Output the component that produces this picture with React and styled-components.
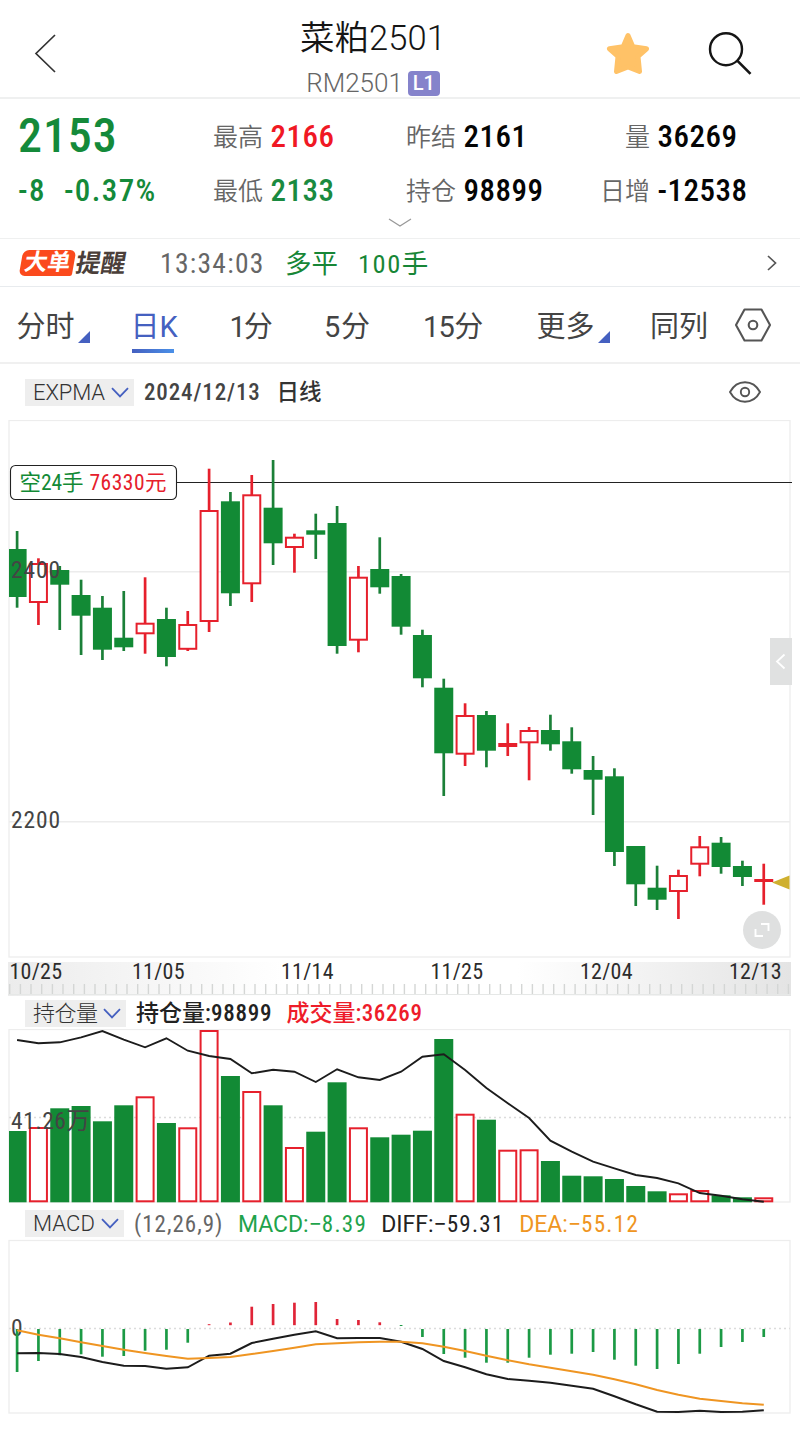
import React from 'react';
import styled, { createGlobalStyle } from 'styled-components';

const GREEN = '#128a35';
const RED = '#e6202c';
const BLUE = '#4560c0';

const STEP = 21.333;
const cx = (i) => 17.1 + i * STEP;

// [rise, high, top, bottom, low, volumeTop]
const candles = [
  [0, 531, 549, 597, 607.7, 1131],
  [1, 558.3, 563, 603, 625, 1127],
  [0, 566, 570, 584.7, 630, 1108.3],
  [0, 579.7, 595, 615.7, 655, 1106],
  [0, 596, 607.7, 649.7, 660, 1121.3],
  [0, 591, 637.7, 647.3, 651, 1105.3],
  [1, 577.3, 622.7, 634.3, 653.7, 1096.3],
  [0, 607.7, 619, 657, 666.3, 1123],
  [1, 611, 624, 649.8, 651, 1127.3],
  [1, 468.7, 510, 622, 632, 1030],
  [0, 492, 501.3, 593.3, 606, 1076],
  [1, 475, 494.3, 584.3, 602, 1091],
  [0, 460, 507.7, 543.3, 565, 1105.3],
  [1, 533.7, 536.7, 548, 572.7, 1147],
  [0, 513.7, 530.3, 534.7, 559, 1131.7],
  [0, 506, 523, 646, 653.7, 1082.3],
  [1, 566, 576.7, 640.7, 652.3, 1127.3],
  [0, 537.3, 569, 587.3, 593.7, 1137.3],
  [0, 574, 576, 626.7, 634.7, 1134.7],
  [0, 629.7, 635, 678.3, 687.3, 1130.7],
  [0, 678.7, 687.7, 753.3, 796, 1039],
  [1, 703.3, 715, 754.7, 766, 1113.7],
  [0, 711, 715, 750.7, 767.3, 1119.7],
  [1, 723.3, 743, 747, 756, 1149.7],
  [1, 727, 730, 743.3, 780.3, 1149.3],
  [0, 714.7, 730, 744.3, 750.7, 1161],
  [0, 727.3, 741.3, 769.3, 773.7, 1175.7],
  [0, 756, 770, 779.7, 815, 1176.3],
  [0, 768.3, 776.3, 852, 866, 1179],
  [0, 846, 846, 884.3, 906, 1186],
  [0, 865.7, 887.7, 899.7, 910, 1191.3],
  [1, 869.7, 875, 892, 919, 1193.3],
  [1, 836, 846.3, 864.7, 876.3, 1190],
  [0, 837, 842.7, 867, 873.7, 1195.3],
  [0, 860.7, 866, 877, 886, 1197.3],
  [1, 863.7, 879, 882, 904.7, 1197.3],
];

const openInterest = [
  1040, 1043.3, 1042.3, 1037.3, 1031, 1039.7, 1047.3, 1038.3, 1050.7, 1056, 1059, 1073.3,
  1069.7, 1071.7, 1082, 1069.3, 1077.3, 1080, 1071.7, 1056.7, 1054.3, 1070, 1088, 1103.3,
  1118, 1140.7, 1151.7, 1161.7, 1168.3, 1175, 1178, 1183.3, 1193, 1195.7, 1199.3, 1201.7,
];

const macd = [
  1372, 1361, 1355.3, 1354.3, 1356.7, 1356, 1350.7, 1349.7, 1342.7, 1324.2, 1322.5, 1306.7,
  1304, 1302.7, 1302, 1319, 1320, 1322.3, 1326, 1337, 1354, 1357.7, 1362.7, 1362.7,
  1357.7, 1354.7, 1353.7, 1352, 1359.7, 1365.7, 1369, 1364, 1353.7, 1347, 1342, 1337,
];

const diff = [
  1353.3, 1353, 1354, 1357, 1362, 1365.7, 1366, 1368.7, 1367.3, 1355.7, 1353.7, 1343,
  1338.7, 1334.7, 1331.3, 1338.3, 1338, 1338, 1341.7, 1349, 1361, 1367.3, 1374.3, 1379,
  1380.7, 1382.7, 1385.7, 1388.7, 1396.3, 1404.3, 1411.7, 1412, 1410.7, 1412, 1411.7, 1410.3,
];

const dea = [
  1330.3, 1334.7, 1338.3, 1342.3, 1346, 1349.7, 1353, 1356, 1358.7, 1358, 1357, 1354,
  1351, 1347.7, 1344.3, 1343.3, 1342.3, 1341.7, 1341.7, 1343.3, 1346.7, 1351, 1355.7, 1360.3,
  1364.3, 1367.7, 1371.3, 1374.7, 1379.3, 1384.3, 1390, 1394.7, 1398.7, 1401, 1403.3, 1404.7,
];

const dates = [
  [9.5, '10/25'],
  [132, '11/05'],
  [281, '11/14'],
  [430.5, '11/25'],
  [580, '12/04'],
  [729, '12/13'],
];

const points = (values) => values.map((y, i) => `${cx(i).toFixed(1)},${y}`).join(' ');

function Bar({ i, rise, top, bottom }) {
  const left = i === 0 ? 9 : cx(i) - 9.5;
  const width = cx(i) + 9.5 - left;
  if (!rise) return <rect x={left} y={top} width={width} height={bottom - top} fill={GREEN} />;
  return (
    <rect
      x={left + 1}
      y={top + 1}
      width={width - 2}
      height={Math.max(bottom - top - 2, 1)}
      fill="#fff"
      stroke={RED}
      strokeWidth="2"
    />
  );
}

function PriceChart() {
  return (
    <Chart viewBox="0 420 800 540" height="540">
      <Frame x="9" y="420.5" width="781" height="536.5" />
      <GridLine d="M9 571.7H790M9 821.7H790" />
      <path d="M176 482.5H792" stroke="#222" strokeWidth="1.1" />
      {candles.map(([rise, high, top, bottom, low], i) => (
        <g key={i}>
          <path d={`M${cx(i)} ${high}V${low}`} stroke={rise ? RED : '#1b8038'} strokeWidth="2.7" />
          <Bar i={i} rise={rise} top={top} bottom={bottom} />
        </g>
      ))}
      <ScaleText x="11" y="578.3" textLength="49">2400</ScaleText>
      <ScaleText x="11" y="828.3" textLength="49">2200</ScaleText>
      <rect x="10.5" y="465.5" width="166" height="34" rx="5" fill="#fff" stroke="#222" strokeWidth="1.1" />
      <TagText x="19.5" y="490" textLength="64" fill={GREEN}>空24手</TagText>
      <TagText x="89.5" y="490" textLength="77" fill={RED}>76330元</TagText>
      <path d="M772 882.5L789.5 875.5V889.5Z" fill="#cfb02f" />
      <rect x="770" y="638" width="22" height="47" fill="#e0e1e1" />
      <path d="M784.5 654.5L777 661.5L784.5 668.5" fill="none" stroke="#fff" strokeWidth="1.8" />
      <circle cx="762" cy="930" r="19" fill="#dfe0e0" />
      <path d="M761 924H768.5V931M755.5 929V936H763" fill="none" stroke="#fff" strokeWidth="1.9" />
    </Chart>
  );
}

function DateAxis() {
  const ticks = Array.from({ length: 74 }, (_, i) => `M${(9.7 + i * 10.667).toFixed(1)} 984V994`).join('');
  return (
    <Chart viewBox="0 960 800 37" height="37">
      <defs>
        <linearGradient id="fade">
          <stop offset="0" stopColor="#ececec" />
          <stop offset="0.35" stopColor="#fff" />
          <stop offset="0.65" stopColor="#fff" />
          <stop offset="1" stopColor="#e4e4e4" />
        </linearGradient>
      </defs>
      <rect x="8" y="962" width="783" height="34" fill="url(#fade)" />
      <path d={ticks} stroke="#d4d6d5" strokeWidth="1.4" />
      <path d="M8 994.5H791" stroke="#e6e8e7" />
      {dates.map(([x, label]) => (
        <DateText key={label} x={x} y="978.5" textLength="52.5">{label}</DateText>
      ))}
    </Chart>
  );
}

function VolumeChart() {
  return (
    <Chart viewBox="0 1029 800 175" height="175">
      <Frame x="9" y="1029.5" width="781" height="172.5" />
      <DotLine d="M9 1117.5H792" />
      {candles.map(([rise, , , , , top], i) => (
        <Bar key={i} i={i} rise={rise} top={top} bottom={1202.3} />
      ))}
      <polyline points={points(openInterest)} fill="none" stroke="#1c1c1c" strokeWidth="1.9" />
      <ScaleText x="11" y="1129" textLength="79">41.26万</ScaleText>
    </Chart>
  );
}

function MacdChart() {
  return (
    <Chart viewBox="0 1239 800 190" height="190">
      <Frame x="9" y="1240.5" width="781" height="172.5" />
      <DotLine d="M9 1328.5H790" />
      <ScaleText x="11" y="1336">0</ScaleText>
      {macd.map((y, i) => {
        const up = y < 1325;
        const from = y === 1326 ? 1325 : up ? 1325.2 : 1329;
        return <path key={i} d={`M${cx(i)} ${from}V${y}`} stroke={up ? '#e02438' : '#1c9a45'} strokeWidth="2.7" />;
      })}
      <polyline points={points(diff)} fill="none" stroke="#1c1c1c" strokeWidth="2" />
      <polyline points={points(dea)} fill="none" stroke="#ef9522" strokeWidth="2" />
    </Chart>
  );
}

function Picker({ label, width, spacing }) {
  return (
    <PickerBox $width={width}>
      <PickerLabel $spacing={spacing}>{label}</PickerLabel>
      <svg width="18" height="11" viewBox="0 0 18 11">
        <path d="M1 1.2L9 9.4L17 1.2" fill="none" stroke={BLUE} strokeWidth="1.8" />
      </svg>
    </PickerBox>
  );
}

function App() {
  return (
    <Page>
      <GlobalStyle />
      <Header>
        <BackIcon width="22" height="40" viewBox="0 0 22 40">
          <path d="M21 2L2 20.5L21 39" fill="none" stroke="#333" strokeWidth="1.7" />
        </BackIcon>
        <Titles>
          <Title>菜粕2501</Title>
          <Code>
            RM2501
            <Level>L1</Level>
          </Code>
        </Titles>
        <svg width="44" height="44" viewBox="0 0 44 44">
          <path
            d="M22 4.5L26.8 15.8L40.5 17.8L32 25.5L33.5 40.5L22 36L10.5 40.5L12 25.5L3.5 17.8L17.2 15.8Z"
            fill="#ffc267"
            stroke="#ffc267"
            strokeWidth="5"
            strokeLinejoin="round"
          />
        </svg>
        <SearchIcon width="44" height="44" viewBox="0 0 44 44">
          <circle cx="18" cy="18.2" r="16" fill="none" stroke="#151515" strokeWidth="2.4" />
          <path d="M29.5 29.8L42.5 42.8" stroke="#151515" strokeWidth="2.6" />
        </SearchIcon>
      </Header>

      <Quote>
        <Price>2153</Price>
        <Field><Label>最高</Label><Value $color="#f01824">2166</Value></Field>
        <Field><Label>昨结</Label><Value>2161</Value></Field>
        <Field><Label>量</Label><Value>36269</Value></Field>
        <Change><span>-8</span><span>-0.37%</span></Change>
        <Field><Label>最低</Label><Value $color="#1a8a40">2133</Value></Field>
        <Field><Label>持仓</Label><Value>98899</Value></Field>
        <Field><Label>日增</Label><Value>-12538</Value></Field>
        <Expand width="24" height="10" viewBox="0 0 24 10">
          <path d="M1 1L12 8L23 1" fill="none" stroke="#999" strokeWidth="1.3" />
        </Expand>
      </Quote>

      <Alert>
        <BigOrder>大单</BigOrder>
        <Remind>提醒</Remind>
        <Clock>13:34:03</Clock>
        <Trade $gap={19}>多平</Trade>
        <Trade $gap={20}><Digits $spacing={1.5}>100</Digits>手</Trade>
        <AlertArrow width="10" height="16" viewBox="0 0 10 16">
          <path d="M1 1L8.5 8L1 15" fill="none" stroke="#555" strokeWidth="1.7" />
        </AlertArrow>
      </Alert>

      <Tabs>
        <Tab>分时<Corner /></Tab>
        <Tab $active>日K</Tab>
        <Tab $spacing={-2}>1分</Tab>
        <Tab $spacing={0.6}>5分</Tab>
        <Tab $spacing={-0.7}>15分</Tab>
        <Tab>更多<Corner /></Tab>
        <Tab>同列</Tab>
        <svg width="38" height="34" viewBox="0 0 38 34">
          <path d="M10.5 1.5H27.5L36 17L27.5 32.5H10.5L2 17Z" fill="none" stroke="#555" strokeWidth="2.1" strokeLinejoin="round" />
          <circle cx="19" cy="17" r="4.3" fill="none" stroke="#555" strokeWidth="2.1" />
        </svg>
      </Tabs>

      <ChartHead>
        <Picker label="EXPMA" width={109} spacing={-0.1} />
        <DateLabel>2024/12/13</DateLabel>
        <Period>日线</Period>
        <EyeIcon width="32" height="22" viewBox="0 0 32 22">
          <path d="M1 11C8 -2 24 -2 31 11C24 24 8 24 1 11Z" fill="none" stroke="#555" strokeWidth="1.9" />
          <circle cx="16" cy="11" r="4.2" fill="none" stroke="#555" strokeWidth="1.9" />
        </EyeIcon>
      </ChartHead>
      <PriceChart />
      <DateAxis />

      <IndicatorHead $height={32}>
        <Picker label="持仓量" width={101} spacing={-0.5} />
        <Reading $gap={10} $weight={500} $color="#222">持仓量:<Digits $spacing={0.7}>98899</Digits></Reading>
        <Reading $gap={14.5} $weight={500} $color="#ee1c2a">成交量:<Digits $spacing={0.7}>36269</Digits></Reading>
      </IndicatorHead>
      <VolumeChart />

      <IndicatorHead $height={35} $drop={4}>
        <Picker label="MACD" width={99} spacing={0.1} />
        <Reading $gap={10} $color="#666"><Digits $spacing={1}>(12,26,9)</Digits></Reading>
        <Reading $gap={14.5} $color="#1fa34c">MACD:−<Digits $spacing={1.3}>8.39</Digits></Reading>
        <Reading $gap={14} $color="#222">DIFF:−<Digits $spacing={1.3}>59.31</Digits></Reading>
        <Reading $gap={14.5} $color="#ef9522">DEA:−<Digits $spacing={1.3}>55.12</Digits></Reading>
      </IndicatorHead>
      <MacdChart />
    </Page>
  );
}

const GlobalStyle = createGlobalStyle`
  body {
    margin: 0;
    background: #fff;
  }

  * {
    box-sizing: border-box;
  }
`;

const Page = styled.div`
  width: 800px;
  height: 1429px;
  overflow: hidden;
  background: #fff;
  font-family: Roboto, "Noto Sans CJK SC", sans-serif;
  white-space: nowrap;
`;

const Header = styled.header`
  display: grid;
  grid-template-columns: 200px 344px 168px 1fr;
  grid-template-rows: 89px;
  justify-items: center;
  align-items: center;
  height: 99px;
  padding-top: 8px;
  border-bottom: 2px solid #eff0f0;
`;

const BackIcon = styled.svg`
  justify-self: start;
  margin-left: 34px;
`;

const SearchIcon = styled.svg`
  justify-self: start;
  margin-left: -4px;
`;

const Titles = styled.div`
  display: flex;
  flex-direction: column;
  align-items: center;
  padding: 6px 0 0 2px;
`;

const Title = styled.div`
  height: 46px;
  line-height: 48px;
  color: #151515;
  font-size: 34.5px;
  font-weight: 350;
  letter-spacing: 0.1px;
`;

const Code = styled.div`
  display: flex;
  align-items: center;
  gap: 5px;
  height: 28px;
  margin-top: 9px;
  color: #666;
  font-size: 26px;
  font-weight: 350;
`;

const Level = styled.span`
  width: 32px;
  height: 25px;
  border-radius: 4px;
  background: #8583cb;
  color: #fff;
  font-size: 20px;
  font-weight: 500;
  line-height: 25px;
  text-align: center;
`;

const Quote = styled.section`
  display: grid;
  grid-template-columns: 195px 193px 194px 1fr;
  grid-template-rows: 54px 54px 20px;
  align-items: center;
  height: 140px;
  padding: 10px 0 0 18px;
  border-bottom: 1px solid #eff0f0;
`;

const Price = styled.div`
  color: #148a3a;
  font-size: 48px;
  font-weight: 500;
  font-stretch: 75%;
  line-height: 50px;
  letter-spacing: 0.9px;
  padding-bottom: 1px;
`;

const Change = styled.div`
  display: flex;
  gap: 18px;
  color: #148a3a;
  font-size: 31px;
  font-weight: 500;
  font-stretch: 75%;
  letter-spacing: 1.4px;
`;

const Field = styled.div`
  display: flex;
  align-items: center;
  gap: 7.5px;
`;

const Label = styled.span`
  width: 50px;
  height: 40px;
  color: #666;
  font-size: 25px;
  font-weight: 350;
  line-height: 43px;
  text-align: right;
`;

const Value = styled.span`
  color: ${(props) => props.$color || '#050505'};
  font-size: 31px;
  font-weight: 500;
  font-stretch: 75%;
  letter-spacing: 0.5px;
`;

const Expand = styled.svg`
  grid-column: 1 / -1;
  align-self: start;
  justify-self: center;
  margin: 1px 0 0 -18px;
`;

const Alert = styled.section`
  display: flex;
  align-items: center;
  height: 48px;
  padding: 1px 23px 0 21px;
  border-bottom: 1px solid #e8ebee;
`;

const BigOrder = styled.span`
  width: 53px;
  height: 26px;
  border-radius: 6px 6px 2px 6px;
  background: #fb4a1d;
  color: #fff;
  font-size: 23px;
  font-weight: 700;
  line-height: 26px;
  text-align: center;
  transform: skewX(-10deg);
`;

const Remind = styled.span`
  width: 50px;
  height: 38px;
  margin-left: 2px;
  color: #4b3f3a;
  font-size: 25px;
  font-weight: 700;
  line-height: 40px;
  transform: skewX(-10deg);
`;

const Clock = styled.span`
  width: 106px;
  margin-left: 34px;
  padding-top: 1px;
  color: #666;
  font-size: 27.5px;
  font-stretch: 75%;
  letter-spacing: 1.3px;
`;

const Digits = styled.span`
  font-stretch: 75%;
  letter-spacing: ${(props) => props.$spacing}px;
`;

const Trade = styled.span`
  height: 40px;
  margin-left: ${(props) => props.$gap}px;
  color: #178636;
  font-size: 26.5px;
  line-height: 41px;
`;

const AlertArrow = styled.svg`
  margin-left: auto;
`;

const Tabs = styled.nav`
  display: grid;
  grid-template-columns: 114px 99px 94.5px 99px 113.5px 113.5px 84px 1fr;
  align-items: center;
  height: 77px;
  padding: 0 0 0 16.5px;
  border-bottom: 2px solid #f0f0f0;
`;

const Tab = styled.div`
  display: flex;
  justify-self: start;
  height: 57px;
  padding-top: 3px;
  color: ${(props) => (props.$active ? BLUE : '#444')};
  font-size: 29px;
  line-height: 56px;
  letter-spacing: ${(props) => props.$spacing || 0}px;
  background: ${(props) => (props.$active ? 'linear-gradient(90deg, #4560c0, #4a90e8)' : 'none')} 1px 100% / 42px 4px no-repeat;
`;

const Corner = styled.i`
  width: 12px;
  height: 12px;
  margin: 32px 0 0 3.5px;
  background: ${BLUE};
  clip-path: polygon(100% 0, 100% 100%, 0 100%);
`;

const ChartHead = styled.div`
  display: flex;
  align-items: center;
  height: 56px;
  padding: 0 39px 0 25px;
`;

const PickerBox = styled.div`
  display: flex;
  align-items: center;
  justify-content: space-between;
  width: ${(props) => props.$width}px;
  height: 27px;
  padding: 0 5px 0 8px;
  background: #eee;
`;

const PickerLabel = styled.span`
  color: #333;
  font-size: 22px;
  font-weight: 300;
  line-height: 27px;
  letter-spacing: ${(props) => props.$spacing}px;
`;

const DateLabel = styled.span`
  width: 119px;
  margin-left: 10px;
  color: #444;
  font-size: 23px;
  font-weight: 500;
  font-stretch: 75%;
  letter-spacing: 0.85px;
`;

const Period = styled.span`
  height: 38px;
  margin-left: 13.5px;
  color: #333;
  font-size: 22.5px;
  font-weight: 500;
  line-height: 38px;
`;

const EyeIcon = styled.svg`
  margin-left: auto;
`;

const IndicatorHead = styled.div`
  display: flex;
  align-items: center;
  height: ${(props) => props.$height}px;
  padding: ${(props) => props.$drop || 0}px 0 0 25px;
`;

const Reading = styled.span`
  height: 34px;
  margin-left: ${(props) => props.$gap}px;
  color: ${(props) => props.$color};
  font-size: 23px;
  font-weight: ${(props) => props.$weight || 400};
  line-height: 35px;
`;

const Chart = styled.svg`
  display: block;
  width: 800px;
`;

const Frame = styled.rect`
  fill: none;
  stroke: #ededed;
  stroke-width: 1.3;
`;

const GridLine = styled.path`
  stroke: #ececec;
  stroke-width: 1.5;
`;

const DotLine = styled.path`
  stroke: #dcdcdc;
  stroke-width: 1.3;
  stroke-dasharray: 2 3;
`;

const ScaleText = styled.text`
  fill: #444;
  font-size: 23.5px;
  font-stretch: 75%;
`;

const TagText = styled.text`
  font-size: 21.5px;
  font-stretch: 75%;
`;

const DateText = styled.text`
  fill: #2c2c2c;
  font-size: 22px;
  font-stretch: 75%;
`;

export default App;
